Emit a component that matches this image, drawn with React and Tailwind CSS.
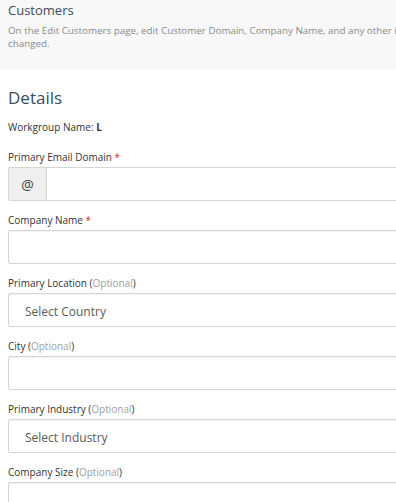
import React from 'react';

function Label({ text, required, optional }) {
  return (
    <div className="text-[10px] leading-[14px] text-[#333] mb-[3px]">
      {text}
      {required && <span className="text-[#e4322b]"> *</span>}
      {optional && (
        <span>
          {' '}(<span className="text-[#a0a0a0]">Optional</span>)
        </span>
      )}
    </div>
  );
}

function Box({ children }) {
  return (
    <div className="h-[34px] flex items-center border border-[#d6d6d6] rounded-[2px] bg-white shadow-[inset_0_1px_1px_rgba(0,0,0,0.05)]">
      {children}
    </div>
  );
}

export default function App() {
  return (
    <div className="w-[396px] h-[502px] overflow-hidden bg-white font-['Open_Sans',sans-serif]">
      <div className="w-[520px]">
        <div className="bg-[#f8f8f8] h-[69px] px-2 pt-[1px]">
          <h1 className="text-[13px] leading-[18px] text-[#3b4b5a]">Customers</h1>
          <p className="mt-[6px] text-[9.8px] leading-[12.5px] text-[#8a8a8a] whitespace-nowrap">
            On the Edit Customers page, edit Customer Domain, Company Name, and any other information that needs to be
            <br />
            changed.
          </p>
        </div>

        <div className="px-2 pt-[17px]">
          <h2 className="text-[17px] leading-[24px] text-[#3b4b5a]">Details</h2>
          <div className="mt-[10px] text-[10px] leading-[14px] text-[#333]">
            Workgroup Name: <span className="font-bold">L</span>
          </div>

          <div className="mt-[16px] flex flex-col gap-[12px]">
            <div>
              <Label text="Primary Email Domain" required />
              <div className="h-[34px] flex border border-[#d6d6d6] rounded-[2px] bg-white">
                <div className="w-[38px] flex items-center justify-center bg-[#efefef] border-r border-[#d6d6d6] text-[14px] text-[#444]">
                  @
                </div>
                <div className="flex-1" />
              </div>
            </div>

            <div>
              <Label text="Company Name" required />
              <Box />
            </div>

            <div>
              <Label text="Primary Location" optional />
              <Box>
                <span className="pl-[16px] pt-[3px] text-[12px] text-[#5a5a5a]">Select Country</span>
              </Box>
            </div>

            <div>
              <Label text="City" optional />
              <Box />
            </div>

            <div>
              <Label text="Primary Industry" optional />
              <Box>
                <span className="pl-[16px] pt-[3px] text-[12px] text-[#5a5a5a]">Select Industry</span>
              </Box>
            </div>

            <div>
              <Label text="Company Size" optional />
              <Box />
            </div>
          </div>
        </div>
      </div>
    </div>
  );
}
